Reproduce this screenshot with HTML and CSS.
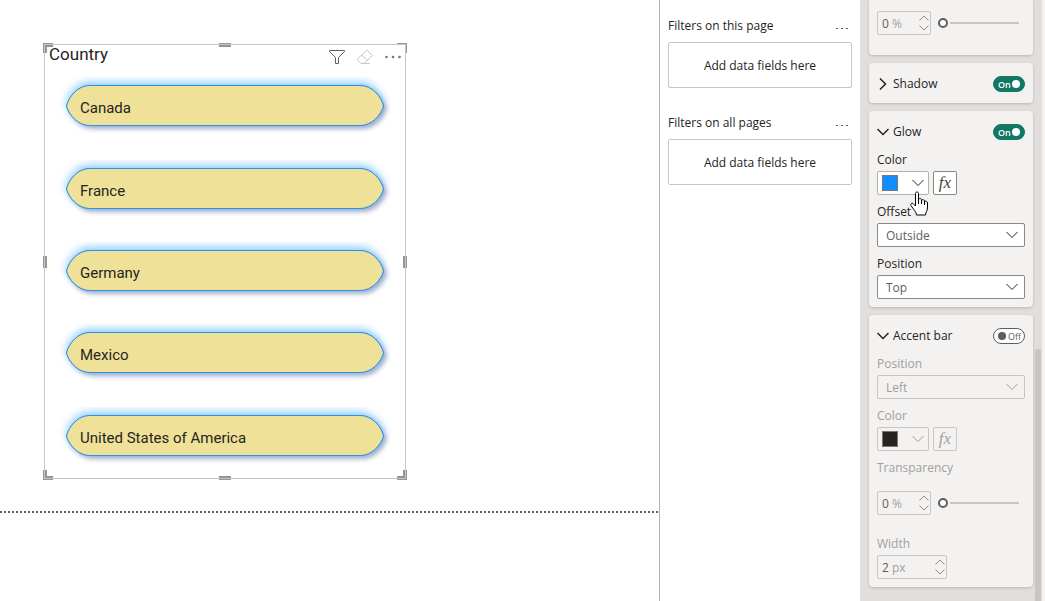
FILE: index.html
```html
<!DOCTYPE html>
<html lang="en">
<head>
    <meta charset="UTF-8">
    <meta name="viewport" content="width=device-width, initial-scale=1.0">
    <title>Report</title>
    <link rel="stylesheet" href="styles.css">
</head>
<body>
    <!-- shared shapes -->
    <svg class="defs" width="0" height="0" aria-hidden="true">
        <defs>
            <filter id="glow" x="-10" y="0" width="360" height="80" filterUnits="userSpaceOnUse">
                <feDropShadow dx="3" dy="3" stdDeviation="2" flood-color="#5a6a90" flood-opacity="0.5" result="shadow"/>
                <feDropShadow in="SourceGraphic" dx="0" dy="-3" stdDeviation="4" flood-color="#118dff" flood-opacity="0.45" result="blue"/>
                <feMerge>
                    <feMergeNode in="shadow"/>
                    <feMergeNode in="blue"/>
                </feMerge>
            </filter>
            <symbol id="pill" viewBox="0 0 340 58">
                <path filter="url(#glow)" fill="#f0e199" stroke="#2b93ea" d="M10.5 29C13 19 22 8.500 34 8.500H304C316 8.500 325 19 327.500 29C325 38 316 48.500 304 48.500H34C22 48.500 13 38 10.500 29Z"/>
            </symbol>
            <symbol id="chevron" viewBox="0 0 12 12">
                <path fill="none" stroke="currentColor" d="M0.500 3L6 8.500L11.500 3"/>
            </symbol>
        </defs>
    </svg>

    <div class="app">
        <main class="canvas">
            <section class="visual">
                <span class="handle corner top left"></span>
                <span class="handle edge top"></span>
                <span class="handle corner thin top right"></span>
                <span class="handle side left"></span>
                <span class="handle side right"></span>
                <span class="handle corner bottom left"></span>
                <span class="handle edge bottom"></span>
                <span class="handle corner bottom right"></span>

                <header class="visual-header">
                    <h1>Country</h1>
                    <div class="visual-tools">
                        <button type="button" aria-label="Filter">
                            <svg width="16" height="16" viewBox="0 0 16 16" fill="none" stroke="#605e5c"><path d="M0.500 1.500H15.500V2.500L9.500 8.500V14.500H6.500V8.500L0.500 2.500Z"/></svg>
                        </button>
                        <button type="button" aria-label="Clear selections">
                            <svg width="16" height="16" viewBox="0 0 16 16" fill="none" stroke="#c8c6c4"><path d="M10 1L15.500 6.500L7 14.500H4L0.500 11V10L10 1ZM4.500 6L10.500 11.500M6 14.500H13"/></svg>
                        </button>
                        <button type="button" aria-label="More options">
                            <svg width="16" height="16" viewBox="0 0 16 16" fill="#797775"><circle cx="1.500" cy="8" r="1.300"/><circle cx="8" cy="8" r="1.300"/><circle cx="14.500" cy="8" r="1.300"/></svg>
                        </button>
                    </div>
                </header>

                <div class="slicer">
                    <button type="button" class="tile"><svg width="340" height="58"><use href="#pill"/></svg><span>Canada</span></button>
                    <button type="button" class="tile"><svg width="340" height="58"><use href="#pill"/></svg><span>France</span></button>
                    <button type="button" class="tile"><svg width="340" height="58"><use href="#pill"/></svg><span>Germany</span></button>
                    <button type="button" class="tile"><svg width="340" height="58"><use href="#pill"/></svg><span>Mexico</span></button>
                    <button type="button" class="tile"><svg width="340" height="58"><use href="#pill"/></svg><span>United States of America</span></button>
                </div>
            </section>
            <div class="page-edge"></div>
        </main>

        <aside class="filters">
            <section class="filter-group">
                <header>
                    <h2>Filters on this page</h2>
                    <button type="button" class="more" aria-label="More options"><i></i><i></i><i></i></button>
                </header>
                <div class="drop-zone">Add data fields here</div>
            </section>
            <section class="filter-group">
                <header>
                    <h2>Filters on all pages</h2>
                    <button type="button" class="more" aria-label="More options"><i></i><i></i><i></i></button>
                </header>
                <div class="drop-zone">Add data fields here</div>
            </section>
        </aside>

        <aside class="format">
            <section class="card card-cut">
                <div class="slider-row">
                    <div class="spinner">
                        <input type="text" value="0" aria-label="Transparency"><span class="unit">%</span>
                        <div class="steps">
                            <button type="button" aria-label="Increase"><svg class="up" width="10" height="10"><use href="#chevron"/></svg></button>
                            <button type="button" aria-label="Decrease"><svg width="10" height="10"><use href="#chevron"/></svg></button>
                        </div>
                    </div>
                    <input type="range" min="0" max="100" value="0" aria-label="Transparency slider">
                </div>
            </section>

            <section class="card">
                <header class="card-header">
                    <button type="button" class="expander"><svg class="closed" width="12" height="12"><use href="#chevron"/></svg>Shadow</button>
                    <label class="toggle"><input type="checkbox" checked aria-label="Shadow"><span>On</span></label>
                </header>
            </section>

            <section class="card">
                <header class="card-header">
                    <button type="button" class="expander"><svg width="12" height="12"><use href="#chevron"/></svg>Glow</button>
                    <label class="toggle"><input type="checkbox" checked aria-label="Glow"><span>On</span></label>
                </header>
                <div class="field">
                    <label for="glow-color">Color</label>
                    <div class="color-row">
                        <button type="button" id="glow-color" class="color-picker"><span class="swatch blue"></span><svg width="12" height="12"><use href="#chevron"/></svg></button>
                        <button type="button" class="fx">fx</button>
                        <svg class="pointer" width="18" height="25" viewBox="0 0 18 25"><path fill="#fff" stroke="#000" stroke-linejoin="round" d="M5.500 15V2.500C5.500 0.500 8.500 0.500 8.500 2.500V9C8.500 7 11.500 7 11.500 9V10C11.500 8 14.500 8.500 14.500 10V11C14.500 9.500 17.500 10 17.500 12V17C17.500 20 15.500 21 15.500 24H6.500C6.500 21 3 18 1 14.500C0 12.500 2.500 11.500 3.500 13L5.500 15M8.500 9V13M11.500 10V13M14.500 11V14"/></svg>
                    </div>
                </div>
                <div class="field">
                    <label for="glow-offset">Offset</label>
                    <div class="select">
                        <select id="glow-offset"><option>Outside</option></select>
                        <svg width="12" height="12"><use href="#chevron"/></svg>
                    </div>
                </div>
                <div class="field">
                    <label for="glow-position">Position</label>
                    <div class="select">
                        <select id="glow-position"><option>Top</option></select>
                        <svg width="12" height="12"><use href="#chevron"/></svg>
                    </div>
                </div>
            </section>

            <section class="card off">
                <header class="card-header">
                    <button type="button" class="expander"><svg width="12" height="12"><use href="#chevron"/></svg>Accent bar</button>
                    <label class="toggle"><input type="checkbox" aria-label="Accent bar"><span>Off</span></label>
                </header>
                <div class="field">
                    <label for="bar-position">Position</label>
                    <div class="select">
                        <select id="bar-position" disabled><option>Left</option></select>
                        <svg width="12" height="12"><use href="#chevron"/></svg>
                    </div>
                </div>
                <div class="field">
                    <label for="bar-color">Color</label>
                    <div class="color-row">
                        <button type="button" id="bar-color" class="color-picker" disabled><span class="swatch"></span><svg width="12" height="12"><use href="#chevron"/></svg></button>
                        <button type="button" class="fx" disabled>fx</button>
                    </div>
                </div>
                <div class="field">
                    <label for="bar-transparency">Transparency</label>
                    <div class="slider-row">
                        <div class="spinner">
                            <input type="text" id="bar-transparency" value="0"><span class="unit">%</span>
                            <div class="steps">
                                <button type="button" aria-label="Increase"><svg class="up" width="10" height="10"><use href="#chevron"/></svg></button>
                                <button type="button" aria-label="Decrease"><svg width="10" height="10"><use href="#chevron"/></svg></button>
                            </div>
                        </div>
                        <input type="range" min="0" max="100" value="0" aria-label="Transparency slider">
                    </div>
                </div>
                <div class="field">
                    <label for="bar-width">Width</label>
                    <div class="spinner wide">
                        <input type="text" id="bar-width" value="2"><span class="unit">px</span>
                        <div class="steps">
                            <button type="button" aria-label="Increase"><svg class="up" width="10" height="10"><use href="#chevron"/></svg></button>
                            <button type="button" aria-label="Decrease"><svg width="10" height="10"><use href="#chevron"/></svg></button>
                        </div>
                    </div>
                </div>
            </section>
            <div class="scroll-thumb"></div>
        </aside>
    </div>
</body>
</html>
```
FILE: styles.css
```css
* { box-sizing: border-box; }

body {
    margin: 0;
    font-family: "Open Sans", "Noto Sans", sans-serif;
    font-size: 12px;
    color: #252423;
    background: #fff;
}

button, input, select {
    margin: 0;
    padding: 0;
    border: none;
    background: none;
    font: inherit;
    color: inherit;
}

h1, h2 { margin: 0; font-weight: normal; }
svg { display: block; }
.defs { position: absolute; }

.app {
    display: flex;
    height: 100vh;
    overflow: hidden;
}

/* Report canvas */
.canvas {
    flex: 1;
    padding-top: 44px;
    font-family: Roboto, sans-serif;
}

.visual {
    position: relative;
    width: 362px;
    margin-left: 44px;
    padding-bottom: 2px;
}

.visual::after {
    content: "";
    position: absolute;
    inset: 0;
    border: 1px solid #c8c6c4;
    pointer-events: none;
}

.handle {
    position: absolute;
    border: 0 solid #979593;
}

.corner { width: 10px; height: 10px; }
.edge { width: 12px; height: 4px; background: #979593; left: 175px; }
.side { width: 4px; height: 12px; background: #979593; top: 212px; }
.top { top: -1px; }
.bottom { bottom: -1px; }
.left { left: -1px; }
.right { right: -1px; }
.corner.top { border-top-width: 4px; }
.corner.bottom { border-bottom-width: 4px; }
.corner.left { border-left-width: 4px; }
.corner.right { border-right-width: 4px; }
.corner.thin { border-width: 1px 1px 0 0; }

.visual-header {
    display: flex;
    justify-content: space-between;
    height: 21px;
    padding: 0 5px;
}

.visual-header h1 {
    font-size: 17px;
    line-height: 20px;
}

.visual-tools {
    display: flex;
    gap: 12px;
    padding-top: 5px;
}

.slicer {
    display: grid;
    grid-template-rows: repeat(5, 1fr);
    height: 412px;
    padding-left: 12px;
}

.tile {
    display: grid;
    align-items: center;
    justify-items: start;
    width: 340px;
    font-size: 15px;
}

.tile svg, .tile span { grid-area: 1 / 1; }
.tile span { padding: 4px 0 0 24px; }

.page-edge {
    height: 2px;
    margin-top: 32px;
    background: repeating-linear-gradient(90deg, #605e5c 0 2px, #fff 2px 4px);
}

/* Filters pane */
.filters {
    width: 201px;
    padding: 18px 8px 0;
    border-left: 1px solid #b3b0ad;
}

.filter-group { margin-bottom: 27px; }

.filter-group header {
    display: flex;
    justify-content: space-between;
    height: 24px;
    padding-right: 4px;
}

.filter-group h2 {
    font-size: 12px;
    line-height: 16px;
}

.more {
    display: flex;
    gap: 3px;
    height: 20px;
    align-items: center;
}

.more i {
    width: 2px;
    height: 1px;
    background: #605e5c;
}

.drop-zone {
    display: flex;
    align-items: center;
    justify-content: center;
    height: 46px;
    border: 1px solid #c8c6c4;
    border-radius: 2px;
}

/* Format pane */
.format {
    position: relative;
    display: flex;
    flex-direction: column;
    gap: 8px;
    width: 185px;
    padding: 0 9px;
    border-right: 3px solid #f3f2f1;
    background: #e1dfdd;
}

.card {
    flex-shrink: 0;
    padding: 0 8px;
    border-radius: 4px;
    background: #f3f2f1;
    box-shadow: 0 1px 3px rgba(0,0,0,0.18);
}

.card-cut {
    height: 55px;
    border-radius: 0 0 4px 4px;
}

.card-header {
    display: flex;
    align-items: center;
    justify-content: space-between;
    height: 40px;
}

.expander {
    display: flex;
    align-items: center;
    gap: 4px;
    padding-top: 1px;
    font-weight: 500;
}

.expander svg { stroke-width: 1.5; }
.closed { transform: rotate(-90deg); }
.up { transform: rotate(180deg); }

.toggle {
    position: relative;
    display: flex;
    align-items: center;
    width: 32px;
    height: 16px;
    margin-top: 2px;
    font-size: 9px;
}

.toggle input {
    appearance: none;
    position: absolute;
    inset: 0;
    border: 1px solid #605e5c;
    border-radius: 8px;
    background: #fff;
}

.toggle input::after {
    content: "";
    position: absolute;
    top: 3px;
    left: 4px;
    width: 8px;
    height: 8px;
    border-radius: 50%;
    background: #605e5c;
}

.toggle span { position: relative; padding-left: 15px; color: #605e5c; }
.toggle input:checked { background: #117865; border-color: #117865; }
.toggle input:checked::after { left: 18px; background: #fff; }
.toggle input:checked + span { padding-left: 5px; color: #fff; font-weight: 600; }

.field { padding-bottom: 8px; }

.field > label {
    display: block;
    height: 20px;
    line-height: 18px;
}

.select { position: relative; }

.select select {
    appearance: none;
    display: block;
    width: 100%;
    height: 24px;
    padding-left: 8px;
    border: 1px solid #8a8886;
    border-radius: 2px;
    background: #fff;
    color: #605e5c;
}

.select svg {
    position: absolute;
    top: 6px;
    right: 7px;
    pointer-events: none;
}

.color-row {
    position: relative;
    display: flex;
    gap: 4px;
}

.color-picker {
    display: flex;
    align-items: center;
    justify-content: space-between;
    width: 52px;
    height: 24px;
    padding: 0 4px;
    border: 1px solid #b3b0ad;
    border-radius: 2px;
    background: #fff;
}

.swatch {
    width: 16px;
    height: 16px;
    border: 1px solid #797775;
    background: #252423;
}

.swatch.blue { background: #118dff; }

.fx {
    width: 24px;
    height: 24px;
    border: 1px solid #8a8886;
    border-radius: 2px;
    background: #fff;
    color: #484644;
    font: italic 17px/20px "Liberation Serif", serif;
}

.pointer {
    position: absolute;
    top: 20px;
    left: 33px;
}

.slider-row {
    display: flex;
    gap: 7px;
    padding: 12px 0;
}

.card-cut .slider-row { padding-top: 11px; }

.spinner {
    display: flex;
    align-items: center;
    width: 54px;
    height: 24px;
    padding-left: 4px;
    border: 1px solid #c8c6c4;
    border-radius: 2px;
}

.spinner.wide { width: 70px; }
.spinner input { width: 10px; color: #605e5c; }
.unit { color: #a19f9d; }

.steps {
    margin-left: auto;
    padding-right: 1px;
    color: #797775;
}

.steps button { display: block; }

input[type="range"] {
    appearance: none;
    flex: 1;
    min-width: 0;
    height: 24px;
    margin-right: 6px;
    background: linear-gradient(#c8c6c4, #c8c6c4) right 11px / calc(100% - 12px) 2px no-repeat;
}

input[type="range"]::-webkit-slider-thumb {
    appearance: none;
    width: 10px;
    height: 10px;
    border: 2px solid #605e5c;
    border-radius: 50%;
    background: #fff;
}

.off .field > label, .off select, .off .color-row, .off .fx, .off .select svg { color: #a19f9d; }
.off select, .off .color-picker, .off .fx { border-color: #c8c6c4; background: none; opacity: 1; }

.scroll-thumb {
    position: absolute;
    top: 349px;
    right: 1px;
    bottom: 0;
    width: 6px;
    border-radius: 3px 3px 0 0;
    background: #c8c6c4;
}
```
